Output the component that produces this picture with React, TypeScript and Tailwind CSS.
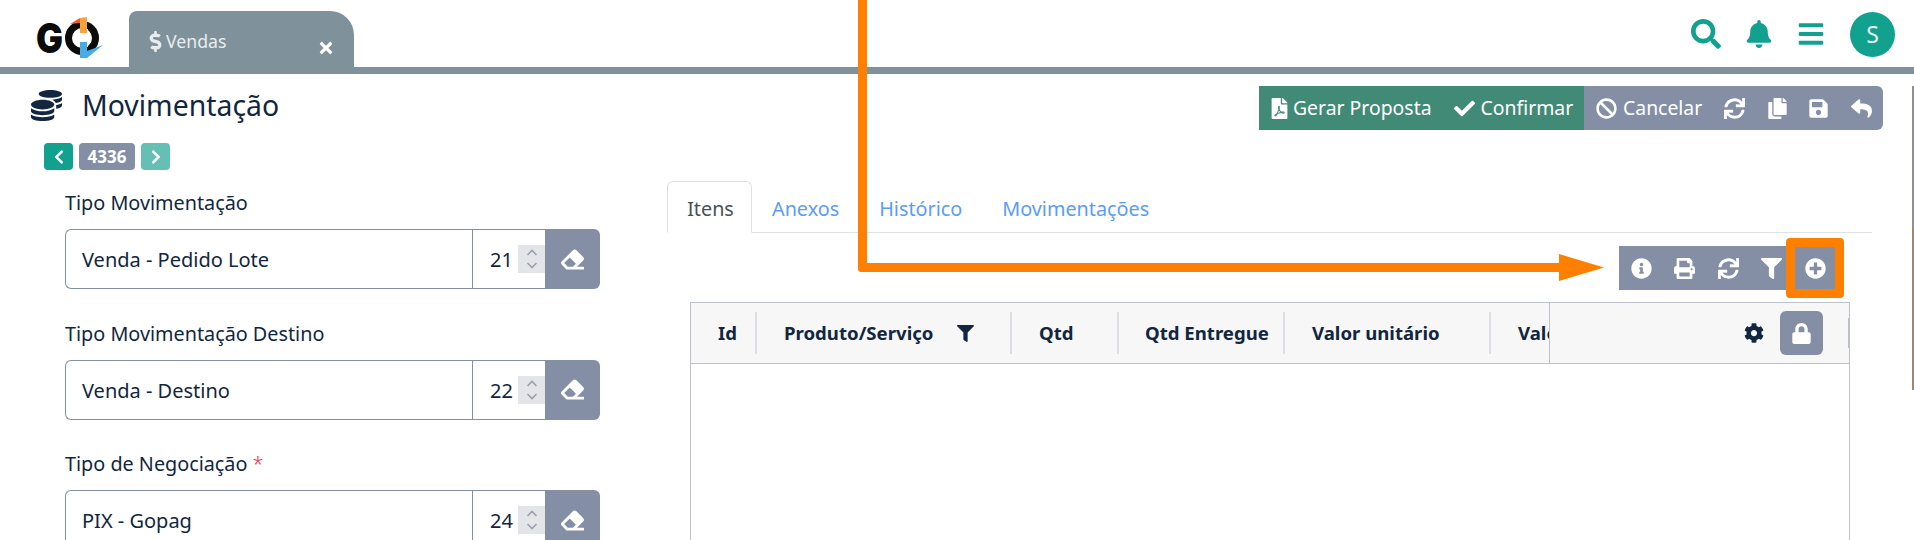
import type { ReactNode } from 'react';
import {
  FaBan,
  FaBars,
  FaBell,
  FaCheck,
  FaChevronLeft,
  FaChevronRight,
  FaCog,
  FaCoins,
  FaCopy,
  FaDollarSign,
  FaEraser,
  FaFilePdf,
  FaFilter,
  FaInfoCircle,
  FaLock,
  FaPlusCircle,
  FaPrint,
  FaReply,
  FaSave,
  FaSearch,
  FaSync,
  FaTimes
} from 'react-icons/fa';

interface FieldProps {
  label: string;
  value: string;
  code: string;
  required?: boolean;
}

const fields: FieldProps[] = [
  { label: 'Tipo Movimentação', value: 'Venda - Pedido Lote', code: '21' },
  { label: 'Tipo Movimentação Destino', value: 'Venda - Destino', code: '22' },
  { label: 'Tipo de Negociação', value: 'PIX - Gopag', code: '24', required: true }
];

const tabs = ['Anexos', 'Histórico', 'Movimentações'];

function Logo() {
  return (
    <svg width="72" height="46" viewBox="0 0 72 46" className="shrink-0 overflow-visible">
      <text
        x="3"
        y="38"
        fontFamily="Inter, sans-serif"
        fontWeight="900"
        fontSize="41"
        fill="#0b0b0b"
        textLength="27"
        lengthAdjust="spacingAndGlyphs"
      >
        G
      </text>
      <circle cx="49" cy="23" r="13.5" fill="none" stroke="#0b0b0b" strokeWidth="7" />
      <rect x="46" y="14" width="9" height="18" fill="#fff" />
      <path d="M47 3 L54 2 L54 18 L47 18 Z" fill="#f9a23b" />
      <path d="M37 9 L47 3 L47 8 Z" fill="#ef5a2b" />
      <path d="M47 27 L54 27 L54 36 L70 30 L54 43 L47 43 Z" fill="#45ace6" />
    </svg>
  );
}

function Field({ label, value, code, required }: FieldProps) {
  return (
    <div className="mb-[31.5px]">
      <div className="h-[30px] text-[19.8px] leading-[26px] text-[#12263f]">
        {label}
        {required && <span className="ml-[5px] font-light text-[#e63757]">*</span>}
      </div>
      <div className="mt-[9px] flex h-[60px] w-[535px]">
        <div className="flex min-w-0 flex-1 items-center rounded-l-md border border-r-0 border-[#848fa5] pl-[16px] text-[20px] text-[#12263f]">
          <span className="mt-[2px] flex-1">{value}</span>
          <div className="flex h-full w-[73px] items-center justify-end border-l border-[#848fa5]">
            <span className="mr-[5px] mt-[2px]">{code}</span>
            <div className="flex h-[28px] w-[27px] flex-col items-center justify-center bg-[#e4e5e9]">
              <svg width="12" height="22" viewBox="0 0 12 22" fill="none" stroke="#9aa0ad" strokeWidth="1.6">
                <path d="M1.5 7 L6 2.5 L10.5 7" />
                <path d="M1.5 15 L6 19.5 L10.5 15" />
              </svg>
            </div>
          </div>
        </div>
        <div className="flex w-[55px] items-center justify-center rounded-r-md bg-[#848fa5] text-white">
          <FaEraser size={23} />
        </div>
      </div>
    </div>
  );
}

function ToolIcon({ children, className }: { children: ReactNode; className: string }) {
  return <span className={`flex items-center justify-center ${className}`}>{children}</span>;
}

function HeadCell({ width, children }: { width: string; children: ReactNode }) {
  return (
    <div className={`flex h-[42px] shrink-0 items-center border-r-2 border-[#dcdee3] ${width}`}>{children}</div>
  );
}

export default function App() {
  return (
    <div
      className="relative h-[540px] w-[1914px] overflow-hidden bg-white text-[#12263f]"
      style={{ fontFamily: '"Noto Sans", sans-serif' }}
    >
      <header className="flex h-[74px] border-b-[7px] border-[#7f929c]">
        <div className="ml-[33px] mt-[15px] w-[96px]">
          <Logo />
        </div>
        <div className="mt-[11px] -mb-[7px] flex h-[63px] w-[225px] rounded-tl-lg rounded-tr-[24px] bg-[#7f929c] pl-[18px] text-[#e8ecee]">
          <div className="flex h-[54px] flex-1 items-center pt-[6px] text-[17.7px]">
            <FaDollarSign size={21} className="-ml-[2px]" />
            Vendas
          </div>
          <FaTimes size={18} className="mr-[19px] mt-[28px] text-white" />
        </div>
        <div className="ml-auto mr-[19px] flex items-center pt-[1px] text-[#12a08f]">
          <FaSearch size={30} className="mr-[24px]" />
          <FaBell size={28} className="mr-[24px]" />
          <FaBars size={28} className="mr-[25px]" />
          <div className="flex h-[45px] w-[45px] items-center justify-center rounded-full bg-[#12a08f] text-[23px] text-[#e8f5f3]">
            S
          </div>
        </div>
      </header>

      <div className="flex h-[44px] items-start justify-between pl-[31px] pr-[31px] pt-[12px]">
        <div className="flex h-[44px] items-center">
          <FaCoins size={31} className="-mt-[5px]" />
          <h1 className="ml-[20px] -mt-[6px] text-[28.4px] font-normal leading-none">Movimentação</h1>
        </div>
        <div className="flex h-[44px] overflow-hidden rounded-r-md text-[19.4px] text-white">
          <div className="flex w-[325px] items-center bg-[#418a75] pl-[10px]">
            <FaFilePdf size={21} className="mr-[3px]" />
            <span>Gerar Proposta</span>
            <FaCheck size={21} className="ml-[22px] mr-[6px]" />
            <span>Confirmar</span>
          </div>
          <div className="flex w-[299px] items-center bg-[#848fa5] pl-[12px]">
            <FaBan size={21} className="mr-[6px]" />
            <span>Cancelar</span>
            <FaSync size={21} className="ml-[22px]" />
            <FaCopy size={21} className="ml-[22px]" />
            <FaSave size={21} className="ml-[20px]" />
            <FaReply size={21} className="ml-[22px]" />
          </div>
        </div>
      </div>

      <div className="mt-[25px] ml-[44px] flex h-[27px] items-center gap-[6px] text-white">
        <div className="flex h-[27px] w-[29px] items-center justify-center rounded bg-[#12a08f]">
          <FaChevronLeft size={16} />
        </div>
        <div className="flex h-[27px] w-[56px] items-center justify-center rounded bg-[#848fa5] text-[17px] font-bold">
          4336
        </div>
        <div className="flex h-[27px] w-[29px] items-center justify-center rounded bg-[#66bfb5]">
          <FaChevronRight size={16} />
        </div>
      </div>

      <div className="flex">
        <div className="ml-[65px] w-[602px] pt-[20px]">
          {fields.map((field) => (
            <Field key={field.label} {...field} />
          ))}
        </div>

        <div className="w-[1205px] pt-[12px]">
          <div className="flex h-[51px] items-end border-b border-[#dee2e6] text-[19.8px] text-[#5b9cf9]">
            <div className="-mb-px flex h-[52px] w-[85px] items-center justify-center rounded-t-md border border-b-white border-[#dee2e6] bg-white pl-[2px] pt-[4px] text-[#495057]">
              Itens
            </div>
            {tabs.map((tab) => (
              <div key={tab} className="flex h-[51px] items-center px-[20px] pt-[5px]">
                {tab}
              </div>
            ))}
          </div>

          <div className="mr-[37px] mt-[13px] flex h-[44px] justify-end">
            <div className="flex w-[216px] items-center bg-[#848fa5] text-white">
              <ToolIcon className="ml-[11px] w-[22px]"><FaInfoCircle size={21} /></ToolIcon>
              <ToolIcon className="ml-[21px] w-[22px]"><FaPrint size={21} /></ToolIcon>
              <ToolIcon className="ml-[22px] w-[22px]"><FaSync size={21} /></ToolIcon>
              <ToolIcon className="ml-[21px] w-[22px]"><FaFilter size={21} /></ToolIcon>
              <ToolIcon className="ml-[22px] w-[22px]"><FaPlusCircle size={21} /></ToolIcon>
            </div>
          </div>

          <div className="ml-[23px] mt-[12px] h-[300px] w-[1160px] border border-[#bcc1cc]">
            <div className="flex h-[61px] items-center border-b border-[#bcc1cc] bg-[#f7f7f8] text-[18.6px] font-bold">
              <div className="flex min-w-0 flex-1 items-center overflow-hidden whitespace-nowrap">
                <HeadCell width="w-[66px] justify-center pl-[9px]">Id</HeadCell>
                <HeadCell width="w-[255px] pl-[27px]">
                  Produto/Serviço
                  <FaFilter size={17} className="ml-[24px]" />
                </HeadCell>
                <HeadCell width="w-[107px] pl-[27px]">Qtd</HeadCell>
                <HeadCell width="w-[166px] pl-[26px]">Qtd Entregue</HeadCell>
                <HeadCell width="w-[206px] pl-[27px]">Valor unitário</HeadCell>
                <div className="shrink-0 pl-[27px]">Valor total</div>
              </div>
              <div className="flex h-full w-[300px] shrink-0 items-center justify-end border-l border-[#bcc1cc]">
                <FaCog size={20} className="mr-[16px]" />
                <div className="flex h-[44px] w-[43px] items-center justify-center rounded-md bg-[#848fa5] text-white">
                  <FaLock size={21} />
                </div>
                <div className="ml-[25px] h-[30px] w-px bg-[#bcc1cc]" />
              </div>
            </div>
          </div>
        </div>
      </div>

      {/* annotation drawn over the page */}
      <div className="absolute left-[858px] top-0 h-[272px] w-[9px] rounded-bl bg-[#ff8000]" />
      <div className="absolute left-[858px] top-[263px] h-[9px] w-[702px] rounded-bl bg-[#ff8000]" />
      <svg className="absolute left-[1559px] top-[254px]" width="46" height="28" viewBox="0 0 46 28">
        <polygon points="0,0 45,13.5 0,27" fill="#ff8000" />
      </svg>
      <div className="absolute left-[1786px] top-[238px] h-[60px] w-[58px] rounded border-[9px] border-[#ff8000]" />
      {/* screen edge line of the original capture */}
      <div className="absolute left-[1912px] top-[86px] h-[142px] w-[2px] bg-[#8f8f95]" />
      <div className="absolute left-[1912px] top-[228px] h-[162px] w-[2px] bg-[#9a8a73]" />
    </div>
  );
}
